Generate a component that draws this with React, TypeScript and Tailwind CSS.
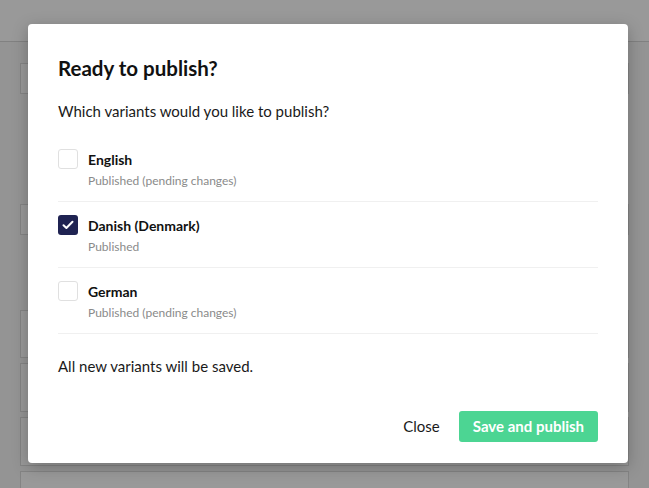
import { useState } from "react"

const variants = [
  { id: "en", name: "English", status: "Published (pending changes)" },
  { id: "da", name: "Danish (Denmark)", status: "Published" },
  { id: "de", name: "German", status: "Published (pending changes)" },
]

function Check({ checked }: { checked: boolean }) {
  if (checked) {
    return (
      <span className="flex h-5 w-5 shrink-0 items-center justify-center rounded-[3px] bg-[#1f2352]">
        <svg width="12" height="10" viewBox="0 0 12 10" fill="none">
          <path d="M1.5 5.2 4.4 8 10.5 1.8" stroke="white" strokeWidth="2" strokeLinecap="round" strokeLinejoin="round" />
        </svg>
      </span>
    )
  }
  return <span className="h-5 w-5 shrink-0 rounded-[3px] border border-[#e0e0e0] bg-white" />
}

export default function App() {
  const [selected, setSelected] = useState<string[]>(["da"])

  const toggle = (id: string) =>
    setSelected(s => (s.includes(id) ? s.filter(x => x !== id) : [...s, id]))

  return (
    <div className="relative h-[488px] w-[649px] overflow-hidden bg-[#f7f7f7] font-['Lato',sans-serif]">
      {/* page behind */}
      <div className="h-[42px] border-b border-[#d8d8d8] bg-white" />
      <div className="flex flex-col px-[20px]">
        <div className="mt-[21px] h-[31px] border border-[#dcdcdc] bg-white" />
        <div className="mt-[110px] h-[31px] border border-[#dcdcdc] bg-white" />
        <div className="mt-[75px] h-[48px] border border-[#dcdcdc] bg-white" />
        <div className="mt-[5px] h-[49px] border border-[#dcdcdc] bg-white" />
        <div className="mt-[5px] h-[49px] border border-[#dcdcdc] bg-white" />
        <div className="mt-[5px] h-[49px] border border-[#dcdcdc] bg-white" />
      </div>

      {/* overlay */}
      <div className="absolute inset-0 flex items-start bg-black/40 pt-[24px] pl-[28px]">
        <div className="w-[600px] rounded-[4px] bg-white px-[30px] pt-[30px] pb-[21px] shadow-[0_4px_16px_rgba(0,0,0,0.25)]">
          <h2 className="text-[20.5px] leading-[28px] font-bold text-[#111]">Ready to publish?</h2>
          <p className="mt-[17px] text-[15px] leading-[24px] text-[#1a1a1a]">
            Which variants would you like to publish?
          </p>

          <ul className="mt-[13px]">
            {variants.map(v => (
              <li
                key={v.id}
                onClick={() => toggle(v.id)}
                className="flex cursor-pointer gap-[10px] border-b border-[#f0f0f0] pt-[13px] pb-[11px]"
              >
                <Check checked={selected.includes(v.id)} />
                <div className="flex flex-col gap-[2px] pt-px">
                  <span className="text-[14px] leading-[20px] font-bold text-[#111]">{v.name}</span>
                  <span className="text-[12px] leading-[18px] text-[#8a8a8a]">{v.status}</span>
                </div>
              </li>
            ))}
          </ul>

          <p className="mt-[20px] text-[15px] leading-[24px] text-[#1a1a1a]">All new variants will be saved.</p>

          <div className="mt-[33px] flex items-center justify-end gap-[19px]">
            <button className="text-[15px] text-[#1a1a1a]">Close</button>
            <button className="h-[31px] rounded-[3px] bg-[#4cd593] px-[14px] text-[15px] font-bold text-white">
              Save and publish
            </button>
          </div>
        </div>
      </div>
    </div>
  )
}
